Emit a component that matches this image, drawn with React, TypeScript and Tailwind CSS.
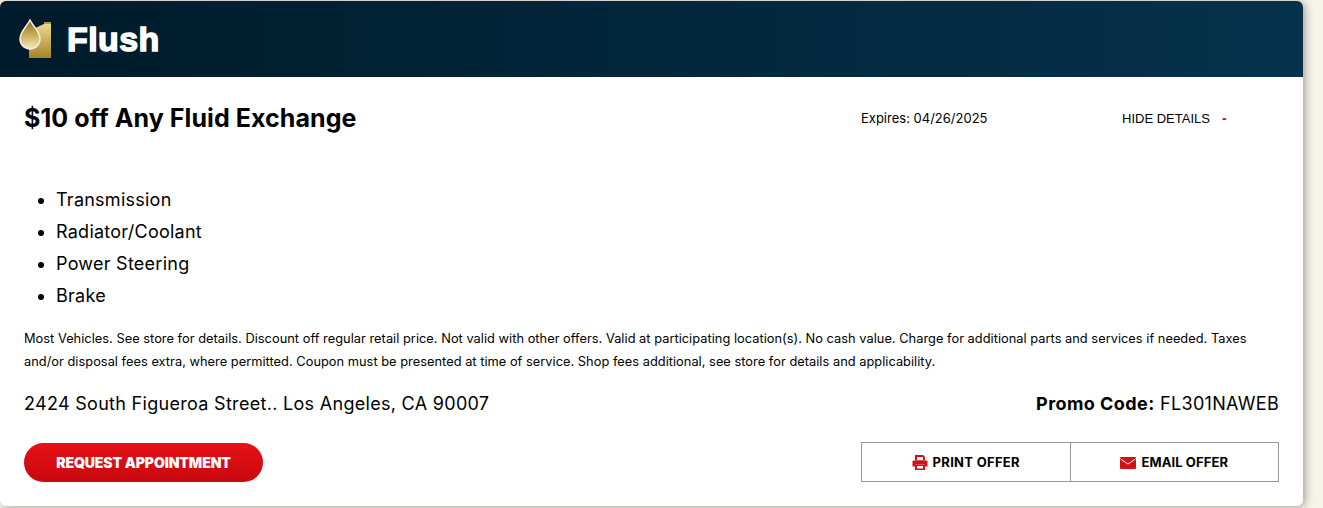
const items = ['Transmission', 'Radiator/Coolant', 'Power Steering', 'Brake']

function FlushIcon() {
  return (
    <svg width="34" height="40" viewBox="0 0 34 40" className="shrink-0">
      <defs>
        <linearGradient id="can" x1="0" y1="0" x2="0" y2="1">
          <stop offset="0" stopColor="#ecd98f" />
          <stop offset="1" stopColor="#a5822b" />
        </linearGradient>
        <linearGradient id="drop" x1="0" y1="0" x2="0" y2="1">
          <stop offset="0" stopColor="#8a6c26" />
          <stop offset="0.5" stopColor="#c9aa52" />
          <stop offset="1" stopColor="#f5ebc0" />
        </linearGradient>
      </defs>
      <path d="M11 12 L26 5 H33 V39 H11 Z" fill="url(#can)" />
      <rect x="26" y="3" width="7" height="2" fill="#b8993f" />
      <path d="M12 1 C14.5 7 22 12 22 20 A10 10 0 0 1 2 20 C2 12 9.5 7 12 1 Z" fill="url(#drop)" stroke="#f4efdc" strokeWidth="1.5" />
    </svg>
  )
}

function PrinterIcon() {
  return (
    <svg width="16" height="17" viewBox="0 0 16 16" className="shrink-0 fill-[#d0101a]">
      <path d="M3 0.5h8l2 2v3.5H3z M5 2.5v3h6V3L10.5 2.5z" fillRule="evenodd" />
      <path d="M1.5 6h13q1 0 1 1V12h-2.5v-2H3v2H.5V7q0-1 1-1z" />
      <path d="M3 10h10V15.5H3z M5 11.5v2.5h6v-2.5z" fillRule="evenodd" />
    </svg>
  )
}

function MailIcon() {
  return (
    <svg width="16" height="12" viewBox="0 0 16 12" className="shrink-0">
      <rect width="16" height="12" rx="1.2" fill="#d0101a" />
      <path d="M0.5 2 L8 7 L15.5 2" fill="none" stroke="#fff" strokeWidth="1" />
    </svg>
  )
}

export default function App() {
  return (
    <div className="h-[508px] overflow-hidden bg-[#f5f3ea] pt-px font-['Inter',sans-serif] text-black">
      <div className="h-[505px] w-[1303px] overflow-hidden rounded-md bg-white shadow-[2px_1px_8px_rgba(90,90,80,0.55)]">
        <div className="flex h-[76px] items-center gap-[15px] bg-gradient-to-r from-[#001b2b] to-[#05324b] pl-[18px]">
          <FlushIcon />
          <span className="font-['Liberation_Sans',sans-serif] text-[34px] font-bold tracking-[0.4px] text-white [-webkit-text-stroke:1.4px_white]">Flush</span>
        </div>

        <div className="flex h-[83px] items-center pl-[24px]">
          <h2 className="w-[837px] text-[25px] font-bold tracking-[0.08px]">$10 off Any Fluid Exchange</h2>
          <span className="w-[261px] text-[13px]">Expires: 04/26/2025</span>
          <span className="font-['Liberation_Sans',sans-serif] text-[13px]">HIDE DETAILS</span>
          <span className="ml-[12px] font-['Liberation_Sans',sans-serif] text-[14px] font-bold text-[#e0002a]">-</span>
        </div>

        <div className="px-[24px] pt-[24px]">
          <ul className="list-disc pl-[32px] text-[18px] leading-[32px] tracking-[0.25px]">
            {items.map((item) => (
              <li key={item}>{item}</li>
            ))}
          </ul>
          <p className="mt-[15px] text-[12.8px] leading-[23px] tracking-[0.03px]">
            Most Vehicles. See store for details. Discount off regular retail price. Not valid with other offers. Valid at participating location(s). No cash value. Charge for additional parts and services if needed. Taxes and/or disposal fees extra, where permitted. Coupon must be presented at time of service. Shop fees additional, see store for details and applicability.
          </p>
          <div className="mt-[17px] flex items-center justify-between text-[18px] leading-[28px] tracking-[0.3px]">
            <span>2424 South Figueroa Street.. Los Angeles, CA 90007</span>
            <span><b className="tracking-[0.45px]">Promo Code:</b> FL301NAWEB</span>
          </div>
          <div className="mt-[24px] flex items-center justify-between">
            <button className="flex h-[39px] w-[239px] items-center justify-center rounded-full bg-gradient-to-b from-[#e81018] to-[#c8080f] text-[14px] font-black tracking-[-0.1px] text-white">
              REQUEST APPOINTMENT
            </button>
            <div className="flex h-[40px] w-[418px] border border-[#999]">
              <button className="flex flex-1 items-center justify-center gap-[5px] border-r border-[#999] pt-[1px] text-[13px] font-bold tracking-[0.3px]">
                <PrinterIcon />
                PRINT OFFER
              </button>
              <button className="flex flex-1 items-center justify-center gap-[5px] pt-[2px] text-[13px] font-bold tracking-[0.1px]">
                <MailIcon />
                EMAIL OFFER
              </button>
            </div>
          </div>
        </div>
      </div>
    </div>
  )
}
